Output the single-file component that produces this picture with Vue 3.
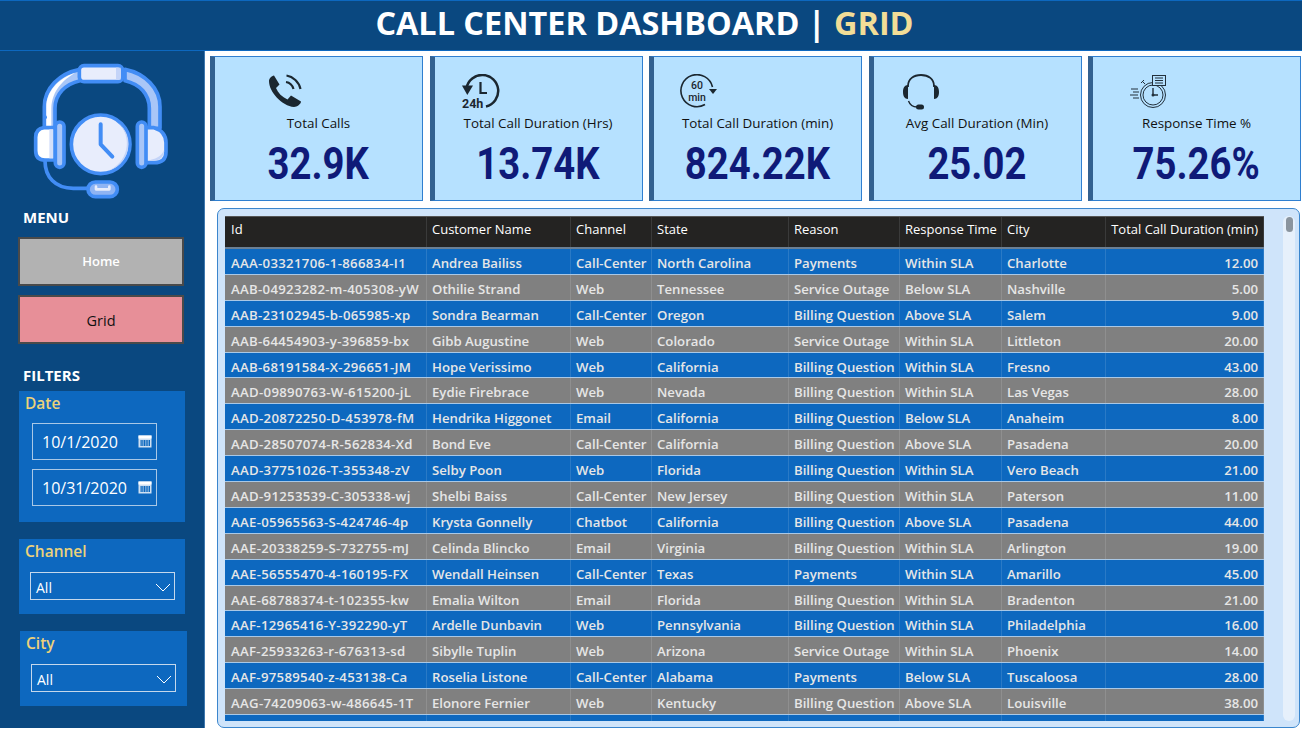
<script setup>
const cards = [
  { icon: 'phone', label: 'Total Calls', value: '32.9K' },
  { icon: 'day', label: 'Total Call Duration (Hrs)', value: '13.74K' },
  { icon: 'hour', label: 'Total Call Duration (min)', value: '824.22K' },
  { icon: 'headset', label: 'Avg Call Duration (Min)', value: '25.02' },
  { icon: 'watch', label: 'Response Time %', value: '75.26%' }
]

const columns = ['Id', 'Customer Name', 'Channel', 'State', 'Reason', 'Response Time', 'City', 'Total Call Duration (min)']

const rows = [
  ['AAA-03321706-1-866834-I1', 'Andrea Bailiss', 'Call-Center', 'North Carolina', 'Payments', 'Within SLA', 'Charlotte', '12.00'],
  ['AAB-04923282-m-405308-yW', 'Othilie Strand', 'Web', 'Tennessee', 'Service Outage', 'Below SLA', 'Nashville', '5.00'],
  ['AAB-23102945-b-065985-xp', 'Sondra Bearman', 'Call-Center', 'Oregon', 'Billing Question', 'Above SLA', 'Salem', '9.00'],
  ['AAB-64454903-y-396859-bx', 'Gibb Augustine', 'Web', 'Colorado', 'Service Outage', 'Within SLA', 'Littleton', '20.00'],
  ['AAB-68191584-X-296651-JM', 'Hope Verissimo', 'Web', 'California', 'Billing Question', 'Within SLA', 'Fresno', '43.00'],
  ['AAD-09890763-W-615200-jL', 'Eydie Firebrace', 'Web', 'Nevada', 'Billing Question', 'Within SLA', 'Las Vegas', '28.00'],
  ['AAD-20872250-D-453978-fM', 'Hendrika Higgonet', 'Email', 'California', 'Billing Question', 'Below SLA', 'Anaheim', '8.00'],
  ['AAD-28507074-R-562834-Xd', 'Bond Eve', 'Call-Center', 'California', 'Billing Question', 'Above SLA', 'Pasadena', '20.00'],
  ['AAD-37751026-T-355348-zV', 'Selby Poon', 'Web', 'Florida', 'Billing Question', 'Within SLA', 'Vero Beach', '21.00'],
  ['AAD-91253539-C-305338-wj', 'Shelbi Baiss', 'Call-Center', 'New Jersey', 'Billing Question', 'Within SLA', 'Paterson', '11.00'],
  ['AAE-05965563-S-424746-4p', 'Krysta Gonnelly', 'Chatbot', 'California', 'Billing Question', 'Above SLA', 'Pasadena', '44.00'],
  ['AAE-20338259-S-732755-mJ', 'Celinda Blincko', 'Email', 'Virginia', 'Billing Question', 'Within SLA', 'Arlington', '19.00'],
  ['AAE-56555470-4-160195-FX', 'Wendall Heinsen', 'Call-Center', 'Texas', 'Payments', 'Within SLA', 'Amarillo', '45.00'],
  ['AAE-68788374-t-102355-kw', 'Emalia Wilton', 'Email', 'Florida', 'Billing Question', 'Within SLA', 'Bradenton', '21.00'],
  ['AAF-12965416-Y-392290-yT', 'Ardelle Dunbavin', 'Web', 'Pennsylvania', 'Billing Question', 'Within SLA', 'Philadelphia', '16.00'],
  ['AAF-25933263-r-676313-sd', 'Sibylle Tuplin', 'Web', 'Arizona', 'Service Outage', 'Within SLA', 'Phoenix', '14.00'],
  ['AAF-97589540-z-453138-Ca', 'Roselia Listone', 'Call-Center', 'Alabama', 'Payments', 'Below SLA', 'Tuscaloosa', '28.00'],
  ['AAG-74209063-w-486645-1T', 'Elonore Fernier', 'Web', 'Kentucky', 'Billing Question', 'Above SLA', 'Louisville', '38.00'],
  ['', '', '', '', '', '', '', '']
]
</script>

<template>
  <div class="page">
    <header class="topbar">
      <h1>CALL CENTER DASHBOARD | <span>GRID</span></h1>
    </header>

    <div class="body">
      <aside class="side">
        <svg class="logo" viewBox="0 0 435 435">
          <g stroke="#428df5" stroke-width="11" stroke-linejoin="round" stroke-linecap="round">
            <path d="M43 205V140C43 85 88 40 150 28V62C105 72 75 103 75 145V205Z" fill="#a9c6f7" />
            <path d="M285 28C345 40 390 85 390 140V205H358V145C358 103 330 72 285 62Z" fill="#a9c6f7" />
            <path d="M49 205V140C49 95 85 55 135 38C100 60 66 90 64 145V205Z" fill="#fff" stroke="none" />
            <rect x="148" y="17" width="130" height="48" rx="14" fill="#e8edfc" />
            <path d="M258 23H272V59H258Z" fill="#c4d4f8" stroke="none" />
            <path d="M42 203C26 205 17 215 17 232V272C17 290 27 300 45 300H75V203Z" fill="#fff" />
            <path d="M58 208H70V295H58Z" fill="#d5e0fa" stroke="none" />
            <rect x="76" y="186" width="26" height="136" rx="13" fill="#a9c6f7" />
            <path d="M345 203H372C395 210 408 225 408 248V275C408 298 395 308 372 308H345Z" fill="#e8edfc" />
            <path d="M402 270C402 290 390 302 372 302H352C375 298 395 290 402 270Z" fill="#c4d4f8" stroke="none" />
            <rect x="322" y="186" width="26" height="136" rx="13" fill="#a9c6f7" />
            <circle cx="212" cy="253" r="88" fill="#e8edfc" />
            <path d="M265 188A83 83 0 0 1 232 333A88 88 0 0 0 265 188Z" fill="#c4d4f8" stroke="none" />
            <path d="M212 193V253L247 290" fill="none" stroke-width="12" />
            <path d="M45 302C45 350 75 385 130 385H176" fill="none" />
            <rect x="174" y="366" width="88" height="44" rx="22" fill="#8fb4f3" />
            <path d="M198 380V388H238V380" fill="none" stroke-width="8" stroke="#e8edfc" />
          </g>
          <circle cx="45" cy="172" r="6" fill="#428df5" />
        </svg>

        <div class="side-title menu-title">MENU</div>
        <button class="nav home">Home</button>
        <button class="nav grid-btn">Grid</button>

        <div class="side-title filter-title">FILTERS</div>

        <section class="filter date-filter">
          <div class="filter-name">Date</div>
          <div class="date-box" v-for="d in ['10/1/2020', '10/31/2020']" :key="d">
            <span>{{ d }}</span>
            <svg width="14" height="13" viewBox="0 0 14 13">
              <rect x="0.5" y="0.5" width="13" height="12" fill="#cfe0f2" />
              <rect x="0.5" y="0.5" width="13" height="3" fill="#fff" />
              <path d="M2 6h10M2 8h10M2 10h10M4 5v6M6.5 5v6M9 5v6M11.5 5v6" stroke="#0d68bf" stroke-width="1" fill="none" />
            </svg>
          </div>
        </section>

        <section class="filter channel-filter">
          <div class="filter-name">Channel</div>
          <div class="select">
            <span>All</span>
            <svg width="16" height="9" viewBox="0 0 16 9"><path d="M1 1l7 7 7-7" stroke="#fff" fill="none" /></svg>
          </div>
        </section>

        <section class="filter city-filter">
          <div class="filter-name">City</div>
          <div class="select">
            <span>All</span>
            <svg width="16" height="9" viewBox="0 0 16 9"><path d="M1 1l7 7 7-7" stroke="#fff" fill="none" /></svg>
          </div>
        </section>
      </aside>

      <main class="main">
        <div class="cards">
          <div class="card" v-for="c in cards" :key="c.label" :class="'card-' + c.icon">
            <div class="card-icon">
              <svg v-if="c.icon === 'phone'" width="36" height="36" viewBox="0 0 36 36">
                <path d="M6 1.5 11.5 10.5 8 14C10 19 14 23 19.5 25.5L23 21.5 33 27.5C33 30 29 33 26 33 14 32 1 18 1 7 1 4.5 3.5 2 6 1.5Z" fill="#1b2730" />
                <path d="M18.5 1.5C25 2.5 31 8 32.5 15M18 8C21.5 8.5 24.5 11.5 25.5 15" stroke="#1b2730" stroke-width="2.2" fill="none" />
              </svg>
              <svg v-else-if="c.icon === 'day'" width="38" height="36" viewBox="0 0 38 36">
                <path d="M4.5 14A16 16 0 1 1 24 32.5" stroke="#1b2730" stroke-width="2.5" fill="none" />
                <path d="M0 11.5H11L5.3 21Z" fill="#1b2730" />
                <path d="M18.5 8V19H25" stroke="#1b2730" stroke-width="2.2" fill="none" />
                <text x="0" y="33.5" class="icon-text bold">24h</text>
              </svg>
              <svg v-else-if="c.icon === 'hour'" width="38" height="36" viewBox="0 0 38 36">
                <path d="M33.5 13A16 16 0 1 0 26 30.5" stroke="#1b2730" stroke-width="1.6" fill="none" />
                <path d="M30 15H38L34 20Z" fill="#1b2730" />
                <text x="18" y="14.5" class="icon-text mid" text-anchor="middle">60</text>
                <text x="18" y="27" class="icon-text mid" text-anchor="middle">min</text>
              </svg>
              <svg v-else-if="c.icon === 'headset'" width="38" height="36" viewBox="0 0 38 36">
                <path d="M6 13V12C6 5 11.5 1 19 1S32 5 32 12V13" stroke="#1b2730" stroke-width="1.8" fill="none" />
                <path d="M6 11V25C2.5 25 1 22 1 18S2.5 11 6 11ZM32 11V25C35.5 25 37 22 37 18S35.5 11 32 11Z" fill="#1b2730" />
                <path d="M6.5 27C8 31 10.5 33 15 33" stroke="#1b2730" stroke-width="1.4" fill="none" />
                <rect x="14" y="30.5" width="8" height="5" rx="2.5" fill="#1b2730" />
              </svg>
              <svg v-else width="36" height="34" viewBox="0 0 36 34">
                <g stroke="#22303c" stroke-width="1" fill="none">
                  <circle cx="23" cy="20" r="12.5" />
                  <circle cx="23" cy="20" r="10" />
                  <path d="M23 13V20H28" stroke-width="1.4" />
                  <path d="M15 9l-2.5-2.5M11 8l3-3" />
                  <path d="M1 14H8M3 17H9M0 20H8M3 23H9" />
                </g>
                <rect x="22.5" y="0.5" width="13" height="10" fill="#b6e1ff" stroke="#22303c" />
                <path d="M25 3H33M25 5.5H33M25 8H33" stroke="#22303c" />
                <circle cx="23" cy="20" r="1.5" fill="#22303c" />
              </svg>
            </div>
            <div class="card-label">{{ c.label }}</div>
            <div class="card-value">{{ c.value }}</div>
          </div>
        </div>

        <div class="panel">
          <div class="table">
            <div class="row head">
              <div class="cell" v-for="(col, i) in columns" :key="col" :class="{ num: i === 7, id: i === 0 }">{{ col }}</div>
            </div>
            <div class="row" v-for="(r, i) in rows" :key="i" :class="i % 2 ? 'gray' : 'blue'">
              <div class="cell" v-for="(v, j) in r" :key="j" :class="{ num: j === 7, id: j === 0 }">{{ v }}</div>
            </div>
          </div>
          <div class="scroll"><div class="thumb"></div></div>
        </div>
      </main>
    </div>
  </div>
</template>

<style>
html, body { margin: 0; background: #fff; }
</style>

<style scoped>
.page {
  width: 1302px;
  height: 731px;
  overflow: hidden;
  font-family: "Open Sans", "Noto Sans", sans-serif;
  background: #fff;
}

.topbar {
  height: 49px;
  background: #0a4880;
  border-top: 1px solid #0d68bf;
  border-bottom: 1px solid #0d68bf;
  display: flex;
  align-items: center;
  justify-content: center;
}

.topbar h1 {
  margin: 0;
  font-size: 32.4px;
  font-weight: 700;
  color: #fff;
  padding: 0 13px 8px 0;
}

.topbar h1 span { color: #f2dd97; }

.body { display: flex; height: 680px; }

.side {
  flex: none;
  background: #0a4880;
  border-right: 1px solid #3f78ae;
  padding-left: 18px;
  box-sizing: border-box;
  width: 205px;
  height: 677px;
}

.logo {
  display: block;
  width: 145px;
  height: 145px;
  margin: 9px 0 0 12px;
}

.side-title {
  color: #fff;
  font-weight: 700;
  font-size: 15px;
  line-height: 20px;
  padding-left: 5px;
}

.menu-title { margin-top: 2px; }

.nav {
  display: block;
  width: 166px;
  height: 49px;
  border: 2px solid #4a4a4a;
  font-family: inherit;
  font-size: 13px;
  padding: 0;
}

.home {
  background: #b2b2b2;
  color: #fff;
  font-weight: 600;
  margin-top: 10px;
  padding-bottom: 2px;
}

.grid-btn {
  background: #e78f98;
  color: #111;
  margin-top: 9px;
  font-size: 14.5px;
  padding-top: 2px;
}

.filter-title { margin-top: 21px; }

.filter {
  background: #0d68bf;
  width: 166px;
  box-sizing: border-box;
  margin-left: 1px;
}

.filter-name {
  color: #ecd27a;
  font-size: 15.5px;
  line-height: 22px;
  font-weight: 600;
  padding-left: 6px;
}

.date-filter {
  height: 131px;
  margin-top: 6px;
  padding-top: 1px;
}

.date-box {
  width: 125px;
  height: 37px;
  margin: 9px 0 0 13px;
  box-sizing: border-box;
  border: 1px solid #a9c8e6;
  display: flex;
  align-items: center;
  justify-content: space-between;
  padding: 0 4px 0 9px;
  color: #fff;
  font-size: 16px;
}

.date-box + .date-box { margin-top: 9px; }

.channel-filter { height: 75px; margin-top: 17px; padding-top: 1px; }

.city-filter { height: 75px; margin: 17px 0 0 2px; width: 167px; padding-top: 1px; }

.select {
  width: 145px;
  height: 28px;
  margin: 10px 0 0 11px;
  box-sizing: border-box;
  border: 1px solid #c5d8ec;
  display: flex;
  align-items: center;
  justify-content: space-between;
  padding: 2px 3px 0 5px;
  color: #fff;
  font-size: 14px;
}

.main { flex: 1; min-width: 0; }

.cards {
  display: flex;
  gap: 6.5px;
  padding: 5px 0 0 5px;
}

.card {
  width: 213px;
  height: 145px;
  flex: none;
  box-sizing: border-box;
  background: #b6e1ff;
  border: 1px solid #2f7fd0;
  border-left: 5px solid #336190;
  position: relative;
  display: flex;
  flex-direction: column;
  align-items: center;
}

.card-icon {
  position: absolute;
  top: 17px;
  line-height: 0;
}

.card-phone .card-icon { left: 53px; }
.card-day .card-icon { left: 27px; }
.card-hour .card-icon { left: 25px; }
.card-headset .card-icon { left: 28px; }
.card-watch .card-icon { left: 37px; top: 18px; }

.card-label {
  margin-top: 56px;
  font-size: 13.4px;
  line-height: 20px;
  color: #111;
}

.card-value {
  margin-top: 6px;
  font-family: Roboto, sans-serif;
  font-size: 44px;
  line-height: 50px;
  font-weight: 700;
  color: #0f1a78;
  transform: scaleX(0.87);
}

.icon-text { font-family: Roboto, sans-serif; fill: #1b2730; }
.icon-text.bold { font-size: 12.5px; font-weight: 700; }
.icon-text.mid { font-size: 10.5px; font-weight: 500; }

.panel {
  margin: 7px 2px 0 12px;
  height: 520px;
  box-sizing: border-box;
  background: #cfe4fa;
  border: 1px solid #3b86cd;
  border-radius: 7px;
  padding: 7px 0 0 7px;
  display: flex;
  overflow: hidden;
}

.table { width: 1039px; height: 505px; overflow: hidden; flex: none; }

.row {
  display: grid;
  grid-template-columns: 202px 144px 81px 137px 111px 102px 104px 158px;
  height: 25.9px;
  box-sizing: border-box;
  border-bottom: 1px solid #a9c8e6;
  font-size: 13.2px;
  font-weight: 600;
  color: #e6e6e6;
}

.cell {
  padding: 4px 5px 0;
  line-height: 20px;
  white-space: nowrap;
  overflow: hidden;
  border-right: 1px solid rgba(255, 255, 255, 0.12);
  box-sizing: border-box;
}

.cell.id { padding-left: 6px; letter-spacing: 0.3px; }
.cell.num { text-align: right; }

.row.head {
  height: 33px;
  background: #242322;
  color: #fff;
  font-size: 13px;
  font-weight: 400;
  border-top: 1px solid #555;
  border-bottom: 2px solid #6b7f94;
}

.row.head .cell { padding-top: 2px; border-right-color: #3a3a3a; letter-spacing: 0; }

.blue { background: #0d68bf; }
.gray { background: #808080; }

.scroll {
  width: 12px;
  height: 505px;
  margin-left: 19px;
  background: #e6f0fb;
  border-radius: 6px;
  overflow: hidden;
}

.thumb {
  width: 7px;
  height: 15px;
  margin: 1px auto 0;
  border-radius: 4px;
  background: #8a949e;
}
</style>
